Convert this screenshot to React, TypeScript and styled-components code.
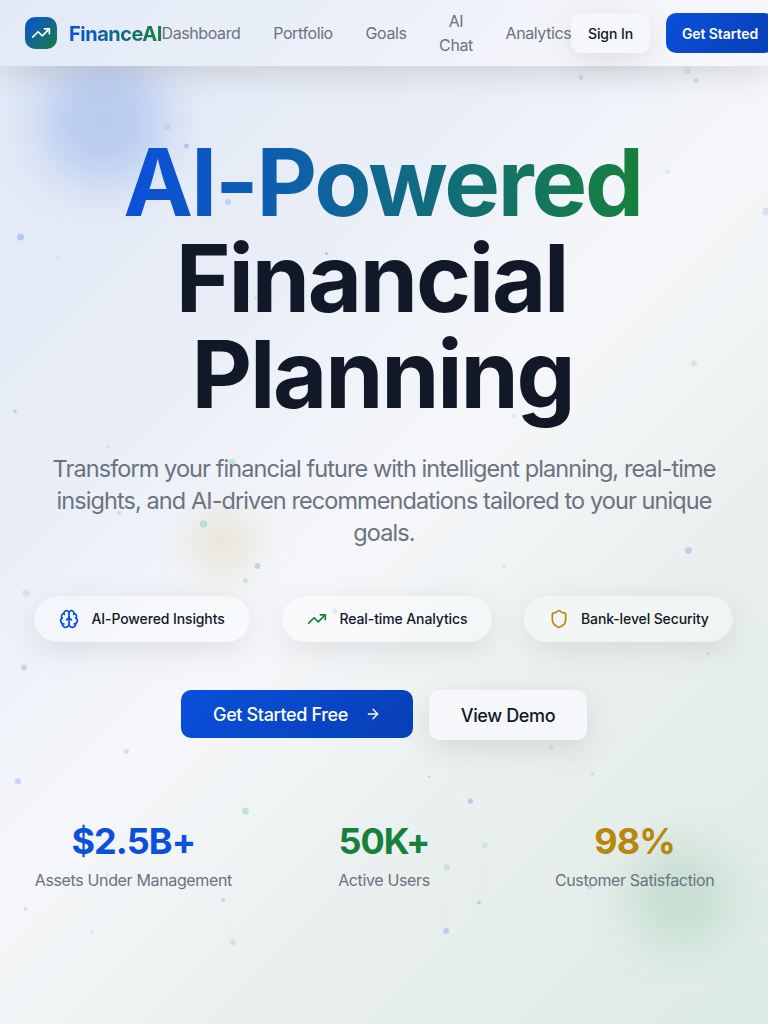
import React from "react";
import styled, { createGlobalStyle } from "styled-components";
import { ArrowRight, Brain, Shield, TrendingUp } from "lucide-react";

const GlobalStyle = createGlobalStyle`
  *, *::before, *::after { box-sizing: border-box; }
  html, body { margin: 0; padding: 0; overflow: hidden; }
  body {
    font-family: Inter, "Liberation Sans", sans-serif;
    font-size: 16px;
    line-height: 24px;
    letter-spacing: -0.022em;
    color: #111827;
    background: #f6f7fa;
  }
  button { font-family: inherit; cursor: pointer; }
`;

const Page = styled.div`
  position: relative;
  height: 1024px;
  overflow: hidden;
  background: linear-gradient(135deg, #dfe9f5 0%, #e4ebf6 14%, #e8edf7 28%, #eef2f8 38%, #f6f7fa 50%, #edf2f2 64%, #e6eeeb 78%, #dcebe5 100%);
`;

const Glow = styled.div<{ $x: number; $y: number; $size: number; $color: string; $blur: number }>`
  position: absolute;
  left: ${(p) => p.$x - p.$size / 2}px;
  top: ${(p) => p.$y - p.$size / 2}px;
  width: ${(p) => p.$size}px;
  height: ${(p) => p.$size}px;
  border-radius: 50%;
  background: ${(p) => p.$color};
  filter: blur(${(p) => p.$blur}px);
`;

const Particles = styled.svg`
  position: absolute;
  inset: 0;
  width: 768px;
  height: 1024px;
  pointer-events: none;
`;

const Header = styled.header`
  position: relative;
  z-index: 2;
  display: flex;
  justify-content: space-between;
  align-items: center;
  height: 66px;
  padding: 0 25px;
  background: linear-gradient(135deg, #e3e9f5 0%, #e7eef8 30%, #eff1fa 58%, #f5f6f9 75%, #f6f7fa 100%);
  box-shadow: 0 8px 32px rgba(0, 0, 0, 0.12);
`;

const Brand = styled.div`
  display: flex;
  align-items: center;
  gap: 12px;
  flex: none;
`;

const BrandMark = styled.div`
  display: flex;
  align-items: center;
  justify-content: center;
  width: 32px;
  height: 32px;
  border-radius: 10px;
  color: #fff;
  background: linear-gradient(135deg, #0a50dc, #16803c);
`;

const GradientText = styled.span`
  background: linear-gradient(90deg, #0a50dc, #16803c);
  background-clip: text;
  -webkit-background-clip: text;
  color: transparent;
`;

const BrandName = styled(GradientText)`
  width: 93px;
  padding-top: 1px;
  font-size: 20px;
  line-height: 28px;
  font-weight: 700;
  letter-spacing: -0.024em;
`;

const Nav = styled.nav`
  display: flex;
  align-items: center;
  gap: 32px;
  margin-left: -0.5px;
`;

const NavLink = styled.a<{ $width: number }>`
  width: ${(p) => p.$width}px;
  text-align: center;
  color: #6b7280;
  letter-spacing: -0.025em;
`;

const Actions = styled.div`
  display: flex;
  gap: 16px;
  flex: none;
`;

const Button = styled.button<{ $primary?: boolean; $large?: boolean; $width: number }>`
  display: flex;
  align-items: center;
  justify-content: center;
  gap: 17px;
  flex: none;
  width: ${(p) => p.$width}px;
  height: ${(p) => (p.$large ? (p.$primary ? 48 : 50) : 40)}px;
  padding: 0;
  border: 0;
  border-radius: 10px;
  font-size: ${(p) => (p.$large ? 18 : 14)}px;
  font-weight: ${(p) => (p.$primary && !p.$large ? 600 : 500)};
  letter-spacing: ${(p) => (p.$large ? "-0.02em" : "-0.006em")};
  white-space: nowrap;
  color: ${(p) => (p.$primary ? "#fff" : "#111827")};
  background: ${(p) => (p.$primary ? "linear-gradient(135deg, #0a50dc, #083fb5)" : "#f6f7fa")};
  box-shadow: ${(p) => (p.$primary ? "none" : "0 8px 32px rgba(0, 0, 0, 0.1)")};
`;

const Hero = styled.main`
  position: relative;
  display: flex;
  flex-direction: column;
  align-items: center;
  padding: 68px 24px 0;
`;

const Title = styled.h1`
  display: flex;
  flex-direction: column;
  align-items: center;
  margin: 0 3px 31px 0;
  font-size: 93.6px;
  line-height: 96px;
  font-weight: 700;
  letter-spacing: -0.0235em;
`;

const TitleLine = styled.span<{ $trail?: number }>`
  padding-right: ${(p) => p.$trail ?? 0}px;
`;

const Lead = styled.p`
  width: 672px;
  margin: 0 0 47px;
  font-size: 23.5px;
  line-height: 32px;
  letter-spacing: -0.039em;
  text-align: center;
  color: #6b7280;
`;

const Features = styled.div`
  display: flex;
  gap: 32px;
  margin: 0 1px 48px 0;
`;

const Feature = styled.div<{ $width: number }>`
  display: flex;
  align-items: center;
  gap: 12.5px;
  width: ${(p) => p.$width}px;
  height: 46px;
  padding-left: 24px;
  border: 1px solid rgba(255, 255, 255, 0.2);
  border-radius: 23px;
  background: rgba(255, 255, 255, 0.35);
  box-shadow: 0 8px 32px rgba(0, 0, 0, 0.09);
  background-clip: padding-box;
  font-size: 14px;
  line-height: 20px;
  font-weight: 500;
  letter-spacing: -0.008em;
  white-space: nowrap;
`;

const CallToAction = styled.div`
  display: flex;
  align-items: flex-start;
  gap: 16px;
  height: 50px;
  margin-bottom: 81px;
`;

const Stats = styled.div`
  display: grid;
  grid-template-columns: repeat(3, 1fr);
  gap: 32px;
  width: 720px;
  text-align: center;
`;

const StatValue = styled.div<{ $color: string }>`
  margin-bottom: 7px;
  font-size: 36px;
  line-height: 40px;
  font-weight: 700;
  letter-spacing: -0.025em;
  color: ${(p) => p.$color};
`;

const StatLabel = styled.div`
  color: #6b7280;
`;

const BLUE = "#0a50dc";
const GREEN = "#22b45a";

const dots: [number, number, number, string, number][] = [
  [167, 127, 3.3, GREEN, 0.12], [186.5, 146, 2.5, BLUE, 0.22], [228, 202, 3, BLUE, 0.18],
  [581, 77.5, 2.3, GREEN, 0.22], [687, 70.5, 3.7, GREEN, 0.12], [696, 80.5, 2.3, GREEN, 0.22],
  [667.5, 171.5, 2.5, GREEN, 0.13], [766, 211.5, 3.7, BLUE, 0.12], [20.5, 237, 3.5, BLUE, 0.22],
  [58, 258, 1.3, BLUE, 0.12], [326.5, 253.5, 1.7, BLUE, 0.24], [255.5, 298, 1.5, GREEN, 0.2],
  [694, 363.5, 3, GREEN, 0.14], [15, 411.5, 1.8, BLUE, 0.18], [514.5, 416, 2, GREEN, 0.15],
  [108.5, 446.5, 1.5, GREEN, 0.2], [232, 462.5, 3.7, GREEN, 0.2], [119, 513, 2.3, GREEN, 0.18],
  [353, 500, 2, GREEN, 0.12], [203.5, 524, 3.7, GREEN, 0.22], [257.5, 566, 3, BLUE, 0.2],
  [245.5, 580.5, 2.6, GREEN, 0.2], [504, 566.5, 2, GREEN, 0.15], [688.5, 550.5, 3.5, BLUE, 0.2],
  [26, 593, 3.7, GREEN, 0.13], [335, 611, 2.5, BLUE, 0.15], [24, 667.5, 3, BLUE, 0.18],
  [707.5, 653.5, 1.5, GREEN, 0.2], [126.5, 751.5, 2.5, BLUE, 0.15], [18, 781.2, 3, BLUE, 0.2],
  [245.5, 811, 3.5, GREEN, 0.22], [108, 874.5, 2.3, GREEN, 0.1], [25.5, 909, 2, BLUE, 0.13],
  [92, 932.5, 1.2, GREEN, 0.22], [223, 900.2, 2, BLUE, 0.18], [233, 942.5, 3, GREEN, 0.16],
  [429, 776.5, 1.3, BLUE, 0.18], [470.5, 801, 2.6, BLUE, 0.22], [484.8, 845.3, 3, GREEN, 0.12],
  [446.7, 867.3, 3, GREEN, 0.16], [479, 902.5, 1.9, BLUE, 0.2], [446, 931, 3, BLUE, 0.2],
  [551.5, 747, 2, GREEN, 0.14], [592.5, 774, 1.6, BLUE, 0.14], [589.5, 887, 2.5, BLUE, 0.14],
];

const links = [
  "M20.5 237L58 258", "M167 127L186.5 146", "M687 70.5L696 80.5",
  "M108 874.5L92 932.5L25.5 909", "M223 900L233 942.5",
  "M429 776.5L470.5 801L484.8 845.3L446.7 867.3L479 902.5L446 931L446.7 867.3", "M484.8 845.3L479 902.5",
  "M551.5 747L592.5 774",
];

const stats = [
  { value: "$2.5B+", label: "Assets Under Management", color: "#0a50dc" },
  { value: "50K+", label: "Active Users", color: "#16803c" },
  { value: "98%", label: "Customer Satisfaction", color: "#b8860b" },
];

export default function App() {
  return (
    <Page>
      <GlobalStyle />
      <Glow $x={104} $y={122} $size={128} $color="rgba(10, 80, 220, 0.2)" $blur={24} />
      <Glow $x={680} $y={897} $size={96} $color="rgba(22, 128, 60, 0.14)" $blur={24} />
      <Glow $x={224} $y={543} $size={64} $color="rgba(184, 134, 11, 0.14)" $blur={19} />
      <Particles viewBox="0 0 768 1024" aria-hidden="true">
        {links.map((d) => (
          <path key={d} d={d} fill="none" stroke="#64748b" strokeOpacity="0.025" />
        ))}
        {dots.map(([x, y, r, color, opacity]) => (
          <circle key={`${x}-${y}`} cx={x} cy={y} r={r} fill={color} fillOpacity={opacity} />
        ))}
      </Particles>

      <Header>
        <Brand>
          <BrandMark><TrendingUp size={20} /></BrandMark>
          <BrandName>FinanceAI</BrandName>
        </Brand>
        <Nav>
          <NavLink $width={79}>Dashboard</NavLink>
          <NavLink $width={61}>Portfolio</NavLink>
          <NavLink $width={41}>Goals</NavLink>
          <NavLink $width={35}>AI Chat</NavLink>
          <NavLink $width={65.5}>Analytics</NavLink>
        </Nav>
        <Actions>
          <Button $width={79}>Sign In</Button>
          <Button $primary $width={108}>Get Started</Button>
        </Actions>
      </Header>

      <Hero>
        <Title>
          <GradientText>AI-Powered</GradientText>
          <TitleLine $trail={22}>Financial</TitleLine>
          <TitleLine>Planning</TitleLine>
        </Title>
        <Lead>
          Transform your financial future with intelligent planning, real-time insights, and AI-driven
          recommendations tailored to your unique goals.
        </Lead>
        <Features>
          <Feature $width={216}><Brain size={20} color="#0a50dc" />AI-Powered Insights</Feature>
          <Feature $width={209.5}><TrendingUp size={20} color="#16803c" />Real-time Analytics</Feature>
          <Feature $width={209.5}><Shield size={20} color="#b8860b" />Bank-level Security</Feature>
        </Features>
        <CallToAction>
          <Button $primary $large $width={232}>Get Started Free<ArrowRight size={16} /></Button>
          <Button $large $width={158}>View Demo</Button>
        </CallToAction>
        <Stats>
          {stats.map((s) => (
            <div key={s.label}>
              <StatValue $color={s.color}>{s.value}</StatValue>
              <StatLabel>{s.label}</StatLabel>
            </div>
          ))}
        </Stats>
      </Hero>
    </Page>
  );
}
